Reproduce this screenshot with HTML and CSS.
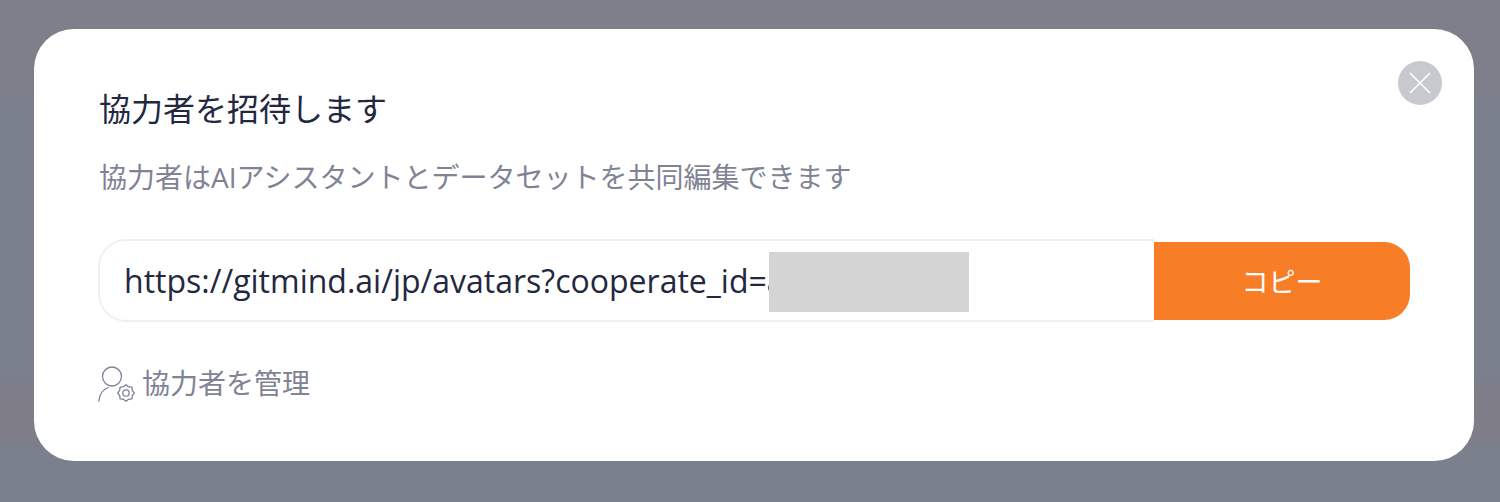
FILE: index.html
```html
<!DOCTYPE html>
<html lang="ja">
<head>
<meta charset="utf-8">
<title>協力者を招待します</title>
<link rel="stylesheet" href="styles.css">
</head>
<body>
<div class="modal">
  <button class="close" aria-label="閉じる">
    <svg width="24" height="24" viewBox="0 0 24 24"><path d="M2.5 2.500 21.500 21.500M21.500 2.500 2.500 21.500" fill="none" stroke="#fff" stroke-width="1.600" stroke-linecap="round"/></svg>
  </button>
  <h1 class="title">協力者を招待します</h1>
  <p class="subtitle">協力者はAIアシスタントとデータセットを共同編集できます</p>
  <div class="link-row">
    <div class="link-box">
      <span class="link-text">https://gitmind.ai/jp/avatars?cooperate_id=a</span>
      <span class="redact"></span>
    </div>
    <button class="copy">コピー</button>
  </div>
  <a class="manage">
    <svg class="manage-icon" width="38" height="38" viewBox="0 0 38 38" fill="none" stroke="#7f8394" stroke-width="1.300" stroke-linecap="round" stroke-linejoin="round">
      <circle cx="14" cy="12.500" r="9.500"/>
      <path d="M0.800 37C1.500 30 5 25.500 10 23.500"/>
      <path d="M36.300 29 34.300 31.600 33.900 34.900 30.600 35.300 28 37.300 25.400 35.300 22.100 34.900 21.700 31.600 19.700 29 21.700 26.400 22.100 23.100 25.400 22.700 28 20.700 30.600 22.700 33.900 23.100 34.300 26.400Z"/>
      <circle cx="28" cy="29" r="3.200"/>
    </svg>
    <span>協力者を管理</span>
  </a>
</div>
</body>
</html>
```
FILE: styles.css
```css
* { box-sizing: border-box; }
html, body { margin: 0; height: 502px; overflow: hidden; }
body {
  padding: 29px 26px 0 34px;
  background: linear-gradient(180deg, #7e7f8a 0, #7e7f8a 85px, #7a808c 105px, #7a808c 370px, #7e7d88 395px, #7e7d88 435px, #7a808c 452px, #7a808c 100%);
  font-family: "Open Sans", "Noto Sans CJK JP", sans-serif;
}
.modal {
  position: relative;
  width: 1440px;
  height: 432px;
  padding: 58px 64px 0;
  background: #fff;
  border-radius: 40px;
}
.close {
  position: absolute;
  top: 32px;
  right: 32px;
  width: 44px;
  height: 44px;
  padding: 0;
  border: 0;
  border-radius: 50%;
  background: #c8c9d0;
  display: flex;
  align-items: center;
  justify-content: center;
}
.title {
  margin: 0;
  padding-left: 1px;
  font-size: 32px;
  line-height: 44px;
  font-weight: 400;
  color: #24283f;
}
.subtitle {
  margin: 26px 0 0;
  padding-left: 1px;
  font-size: 28px;
  line-height: 40px;
  color: #7f8394;
}
.link-row {
  display: flex;
  align-items: center;
  margin-top: 42px;
  height: 83px;
}
.link-box {
  position: relative;
  width: 1056px;
  height: 83px;
  padding-left: 24px;
  display: flex;
  align-items: center;
  border: 2px solid #f0f0f2;
  border-right: 0;
  border-radius: 28px 0 0 28px;
}
.link-text {
  font-size: 32px;
  color: #24283f;
  white-space: nowrap;
}
.redact {
  position: absolute;
  left: 669px;
  top: 11px;
  width: 200px;
  height: 60px;
  background: #d4d4d4;
}
.copy {
  width: 256px;
  height: 78px;
  padding: 0;
  border: 0;
  border-radius: 0 26px 26px 0;
  background: #f77d27;
  color: #fff;
  font-family: inherit;
  font-size: 27px;
}
.manage {
  display: flex;
  align-items: center;
  gap: 6px;
  margin-top: 41px;
  color: #7f8394;
  font-size: 28px;
  line-height: 40px;
}
.manage-icon { flex: none; }
```
